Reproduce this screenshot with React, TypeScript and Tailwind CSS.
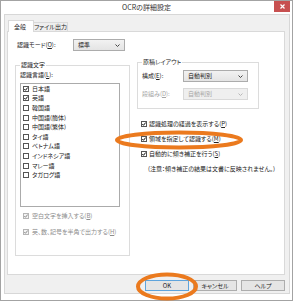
import type { ReactNode } from 'react';

const languages = [
  { name: '日本語', checked: true },
  { name: '英語', checked: true },
  { name: '韓国語', checked: false },
  { name: '中国語(簡体)', checked: false },
  { name: '中国語(繁体)', checked: false },
  { name: 'タイ語', checked: false },
  { name: 'ベトナム語', checked: false },
  { name: 'インドネシア語', checked: false },
  { name: 'マレー語', checked: false },
  { name: 'タガログ語', checked: false },
];

function Key({ k }: { k: string }) {
  return (
    <>
      (<span className="underline">{k}</span>)
    </>
  );
}

function CheckBox({ checked = false, disabled = false }: { checked?: boolean; disabled?: boolean }) {
  return (
    <span
      className={
        disabled
          ? 'w-[6px] h-[6px] shrink-0 border border-[#b5b5b5] bg-[#f4f4f4] flex items-center justify-center'
          : 'w-[6px] h-[6px] shrink-0 border border-[#555] bg-white flex items-center justify-center'
      }
    >
      {checked && (
        <svg width="4" height="4" viewBox="0 0 4 4">
          <path
            d="M0.3 2 L1.5 3.3 L3.7 0.5"
            fill="none"
            stroke={disabled ? '#8c8c8c' : '#111'}
            strokeWidth="1"
          />
        </svg>
      )}
    </span>
  );
}

function Chevron({ color }: { color: string }) {
  return (
    <svg width="5" height="3" viewBox="0 0 5 3">
      <path d="M0.5 0.5 L2.5 2.5 L4.5 0.5" fill="none" stroke={color} strokeWidth="1" />
    </svg>
  );
}

function Select({ value, width, disabled = false }: { value: string; width: string; disabled?: boolean }) {
  return (
    <div
      className={
        disabled
          ? `${width} h-[12px] flex items-center justify-between pl-[4px] pr-[4px] border border-[#d9d9d9] bg-[#efefef] text-[#a6a6a6]`
          : `${width} h-[12px] flex items-center justify-between pl-[4px] pr-[4px] border border-[#acacac] bg-gradient-to-b from-[#f2f2f2] to-[#e4e4e4] text-[#222]`
      }
    >
      <span>{value}</span>
      <Chevron color={disabled ? '#b8b8b8' : '#444'} />
    </div>
  );
}

function Button({ children, primary = false }: { children: ReactNode; primary?: boolean }) {
  return (
    <div
      className={
        primary
          ? 'w-[44px] h-[11px] flex items-center justify-center bg-[#e5e5e5] border border-[#5fa4dc] text-[#222]'
          : 'w-[44px] h-[11px] flex items-center justify-center bg-[#e5e5e5] border border-[#adadad] text-[#222]'
      }
    >
      {children}
    </div>
  );
}

export default function App() {
  return (
    <div className="relative w-[293px] h-[301px] bg-white border border-[#a3a3a3] flex flex-col font-['Noto_Sans_CJK_JP',sans-serif] [font-feature-settings:'palt'] text-[6px] leading-none text-[#222]">
      {/* title bar */}
      <div className="h-[13px] flex items-start">
        <div className="w-[18px] shrink-0" />
        <div className="flex-1 h-[13px] flex items-center justify-center text-[7px] text-[#333]">OCRの詳細設定</div>
        <div className="w-[16px] h-[11px] mr-[2px] bg-[#c75050] flex items-center justify-center">
          <svg width="5" height="5" viewBox="0 0 5 5">
            <path d="M0.5 0.5 L4.5 4.5 M4.5 0.5 L0.5 4.5" stroke="#fff" strokeWidth="1.2" />
          </svg>
        </div>
      </div>

      {/* client area */}
      <div className="flex-1 ml-[3px] mr-[2px] mb-[6px] border border-[#d7d7d7] bg-[#f0f0f0] flex flex-col pt-[5px] pl-[2px] pr-[4px] pb-[2px]">
        {/* tabs */}
        <div className="h-[11px] flex items-end pl-[1px]">
          <div className="relative z-10 w-[26px] h-[12px] -mb-px bg-white border border-b-0 border-[#d9d9d9] flex items-center pl-[5px]">
            全般
          </div>
          <div className="w-[34px] h-[9px] bg-[#eeeeee] border border-b-0 border-l-0 border-[#d9d9d9] flex items-center justify-center whitespace-nowrap">
            ファイル出力
          </div>
        </div>

        {/* panel */}
        <div className="flex-1 border border-[#d9d9d9] bg-white pt-[7px]">
          <div className="flex items-center pl-[9px]">
            <span className="w-[56px]">
              認識モード<Key k="O" />:
            </span>
            <Select value="標準" width="w-[52px]" />
          </div>

          <div className="flex items-start mt-[8px] pl-[7px]">
            {/* left column */}
            <fieldset className="mt-[3px] w-[115px] h-[194px] border border-[#dcdcdc]">
              <legend className="ml-[4px] px-[1px]">認識文字</legend>
              <div className="pl-[4px] mt-[4px]">
                認識言語<Key k="L" />:
              </div>
              <div className="ml-[4px] mt-[5px] w-[100px] h-[124px] border border-[#ababab] bg-white">
                {languages.map((lang) => (
                  <div key={lang.name} className="h-[9.6px] flex items-center pl-[2px] gap-[3px]">
                    <CheckBox checked={lang.checked} />
                    <span>{lang.name}</span>
                  </div>
                ))}
              </div>
              <div className="mt-[5px] pl-[7px] h-[8px] flex items-center gap-[3px] text-[#8d8d8d]">
                <CheckBox checked disabled />
                <span>
                  空白文字を挿入する<Key k="B" />
                </span>
              </div>
              <div className="mt-[8px] pl-[7px] h-[8px] flex items-center gap-[3px] text-[#8d8d8d]">
                <CheckBox checked disabled />
                <span>
                  英、数、記号を半角で出力する<Key k="H" />
                </span>
              </div>
            </fieldset>

            {/* right column */}
            <div className="ml-[7px] w-[140px]">
              <fieldset className="w-[122px] border border-[#dcdcdc] pb-[8px]">
                <legend className="ml-[4px] px-[1px]">原稿レイアウト</legend>
                <div className="flex items-center pl-[4px] mt-[5px]">
                  <span className="w-[41px]">
                    構成<Key k="E" />:
                  </span>
                  <Select value="自動判別" width="w-[65px]" />
                </div>
                <div className="flex items-center pl-[4px] mt-[6px] text-[#a6a6a6]">
                  <span className="w-[41px]">
                    段組み<Key k="D" />:
                  </span>
                  <Select value="自動判別" width="w-[65px]" disabled />
                </div>
              </fieldset>

              <div className="mt-[7px]">
                <div className="h-[15px] flex items-center pl-[4px] gap-[2px]">
                  <CheckBox checked />
                  <span>
                    認識処理の経過を表示する<Key k="P" />
                  </span>
                </div>
                <div className="h-[15px] flex items-center pl-[4px] gap-[2px]">
                  <CheckBox checked />
                  <span>
                    領域を指定して認識する<Key k="M" />
                  </span>
                </div>
                <div className="h-[15px] flex items-center pl-[4px] gap-[2px]">
                  <CheckBox checked />
                  <span>
                    自動的に傾き補正を行う<Key k="S" />
                  </span>
                </div>
                <div className="h-[15px] flex items-center pl-[11px] whitespace-nowrap">
                  (注意：傾き補正の結果は文書に反映されません。)
                </div>
              </div>
            </div>
          </div>
        </div>

        {/* buttons */}
        <div className="mt-[5px] flex justify-end gap-[4px]">
          <Button primary>OK</Button>
          <Button>キャンセル</Button>
          <Button>ヘルプ</Button>
        </div>
      </div>

      {/* orange highlight marks */}
      <svg className="absolute inset-0 pointer-events-none" width="293" height="301" viewBox="0 0 293 301">
        <ellipse cx="178" cy="139" rx="62" ry="7.5" fill="none" stroke="#eb7a1e" strokeWidth="4" />
        <ellipse cx="166" cy="285.5" rx="29" ry="12" fill="none" stroke="#eb7a1e" strokeWidth="4" />
      </svg>
    </div>
  );
}
